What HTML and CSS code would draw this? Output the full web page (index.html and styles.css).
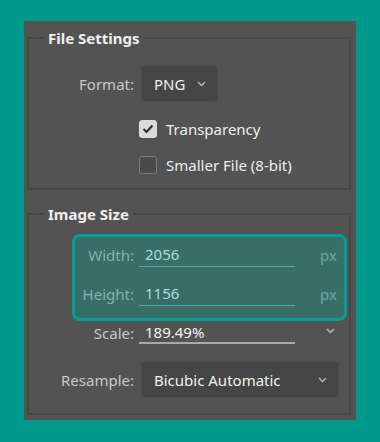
FILE: index.html
```html
<!DOCTYPE html>
<html lang="en">
  <head>
    <meta charset="UTF-8" />
    <meta name="viewport" content="width=device-width, initial-scale=1.0" />
    <title>Export Settings</title>
    <link rel="stylesheet" href="styles.css">
  </head>
  <body>
    <div class="panel">
      <fieldset class="group group-file">
        <legend>File Settings</legend>
        <div class="row row-format">
          <label class="row-label" for="format">Format:</label>
          <div class="select select-format" id="format">
            <span>PNG</span>
            <svg class="chevron" width="9" height="6" viewBox="0 0 9 6"><polyline points="1,1 4.5,4.5 8,1" /></svg>
          </div>
        </div>
        <div class="row row-check">
          <span class="checkbox checked">
            <svg width="12" height="10" viewBox="0 0 12 10"><polyline points="1.5,5 4.5,8 10.5,1.5" /></svg>
          </span>
          <span class="check-text">Transparency</span>
        </div>
        <div class="row row-check">
          <span class="checkbox"></span>
          <span class="check-text">Smaller File (8-bit)</span>
        </div>
      </fieldset>

      <fieldset class="group group-size">
        <legend>Image Size</legend>
        <div class="highlight">
          <div class="row row-dim">
            <label class="row-label">Width:</label>
            <span class="field">2056</span>
            <span class="unit">px</span>
          </div>
          <div class="row row-dim">
            <label class="row-label">Height:</label>
            <span class="field">1156</span>
            <span class="unit">px</span>
          </div>
        </div>
        <div class="row row-scale">
          <label class="row-label">Scale:</label>
          <span class="field">189.49%</span>
          <svg class="chevron scale-chevron" width="9" height="6" viewBox="0 0 9 6"><polyline points="1,1 4.5,4.5 8,1" /></svg>
        </div>
        <div class="row row-resample">
          <label class="row-label">Resample:</label>
          <div class="select select-resample">
            <span>Bicubic Automatic</span>
            <svg class="chevron" width="9" height="6" viewBox="0 0 9 6"><polyline points="1,1 4.5,4.5 8,1" /></svg>
          </div>
        </div>
      </fieldset>
    </div>
  </body>
</html>
```

FILE: styles.css
```css
/* Export panel */
body {
  margin: 0;
  padding: 0;
  background-color: #009a8d;
  font-family: "Noto Sans", "Open Sans", sans-serif;
  font-size: 15px;
  color: #c9c9c9;
}

.panel {
  box-sizing: border-box;
  width: 332px;
  height: 399px;
  margin: 21px 0 0 24px;
  padding: 7px 5px 0 3px;
  background-color: #535353;
}

.group {
  margin: 0;
  padding: 0;
  border: 2px solid #484848;
}

.group legend {
  margin-left: 15px;
  padding: 0 4px;
  height: 20px;
  line-height: 20px;
  font-weight: bold;
  color: #eeeeee;
}

.group-file {
  padding: 17px 0 5px;
}

.group-size {
  margin-top: 14px;
  padding: 10px 0 15px;
}

.row {
  display: flex;
  align-items: center;
}

.row-label {
  width: 105px;
  flex: none;
  text-align: right;
}

/* dropdowns */
.select {
  box-sizing: border-box;
  display: flex;
  align-items: center;
  justify-content: space-between;
  height: 37px;
  margin-left: 7px;
  padding: 0 11px 0 12px;
  background-color: #454545;
  border: 1px solid #4d4d4d;
  border-radius: 4px;
  color: #f2f2f2;
}

.select-format {
  width: 77px;
}

.select-resample {
  width: 198px;
}

.chevron polyline {
  fill: none;
  stroke: #b4b4b4;
  stroke-width: 1.5;
}

/* checkboxes */
.row-check {
  height: 36px;
  padding-left: 110px;
}

.row-format + .row-check {
  margin-top: 9px;
}

.checkbox {
  box-sizing: border-box;
  display: flex;
  align-items: center;
  justify-content: center;
  width: 18px;
  height: 18px;
  border: 1.5px solid #7c7c7c;
  border-radius: 3px;
  background-color: #4b4b4b;
}

.checkbox.checked {
  border-color: #dcdcdc;
  background-color: #dcdcdc;
}

.checkbox polyline {
  fill: none;
  stroke: #333333;
  stroke-width: 2.2;
}

.check-text {
  margin-left: 9px;
  color: #eeeeee;
}

/* width / height block */
.highlight {
  margin: 0 2px 0 43px;
  padding: 2px 0 8px;
  border: 3px solid #00a193;
  border-radius: 8px;
  background-color: #386e68;
}

.highlight .row-label {
  width: 59px;
  color: #86b3ad;
}

.row-dim {
  height: 32px;
}

.row-dim + .row-dim {
  margin-top: 7px;
}

.field {
  box-sizing: border-box;
  width: 156px;
  height: 24px;
  margin-left: 5px;
  padding: 0 0 0 6px;
  line-height: 22px;
  border-bottom: 1px solid #5fa59c;
  color: #a9ddd5;
}

.unit {
  margin-left: 25px;
  color: #6aaaa1;
}

/* scale + resample */
.row-scale {
  height: 24px;
}

.row-scale .field {
  border-bottom: 2px solid #a9a9a9;
  color: #f2f2f2;
  line-height: 20px;
  height: 22px;
}

.scale-chevron {
  margin-left: 31px;
  margin-top: -4px;
}

.row-resample {
  margin-top: 16px;
}
```
